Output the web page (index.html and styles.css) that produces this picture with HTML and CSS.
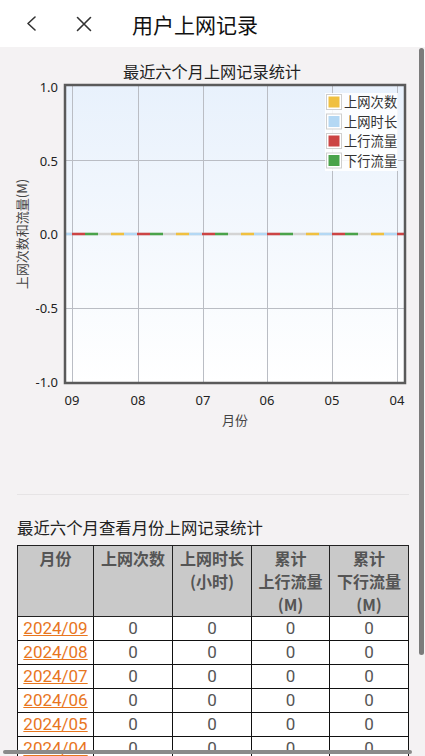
FILE: index.html
```html
<!DOCTYPE html>
<html lang="zh-CN">
<head>
<meta charset="utf-8">
<title>用户上网记录</title>
<link rel="stylesheet" href="styles.css">
</head>
<body>
<header class="topbar">
  <svg class="icon back" width="16" height="16" viewBox="0 0 16 16"><polyline points="11,1 4,7.5 11,14" fill="none" stroke="#333" stroke-width="1.6" stroke-linecap="round" stroke-linejoin="round"/></svg>
  <svg class="icon close" width="16" height="16" viewBox="0 0 16 16"><path d="M1.5 1.5 L14.5 14.5 M14.5 1.5 L1.5 14.5" fill="none" stroke="#333" stroke-width="1.6" stroke-linecap="round"/></svg>
  <h1 class="title">用户上网记录</h1>
</header>
<main class="content">
  <svg class="chart" width="408" height="447" viewBox="0 47 408 447">
    <defs>
      <linearGradient id="bg" x1="0" y1="0" x2="0" y2="1">
        <stop offset="0" stop-color="#e8f1fc"/>
        <stop offset="1" stop-color="#ffffff"/>
      </linearGradient>
    </defs>
    <text class="ctitle" x="212" y="78" text-anchor="middle">最近六个月上网记录统计</text>
    <rect x="65" y="85" width="340" height="298" fill="url(#bg)"/>
    <g stroke="#babdc4" stroke-width="1">
      <line x1="65" y1="160.5" x2="405" y2="160.5"/>
      <line x1="65" y1="308.5" x2="405" y2="308.5"/>
      <line x1="72.5" y1="85" x2="72.5" y2="383"/>
      <line x1="138.5" y1="85" x2="138.5" y2="383"/>
      <line x1="203.5" y1="85" x2="203.5" y2="383"/>
      <line x1="267.5" y1="85" x2="267.5" y2="383"/>
      <line x1="332.5" y1="85" x2="332.5" y2="383"/>
      <line x1="397.5" y1="85" x2="397.5" y2="383"/>
    </g>
    <g stroke-width="2.5">
      <line x1="65" y1="234" x2="405" y2="234" stroke="#d4d4d4"/>
      <line x1="72" y1="234" x2="405" y2="234" stroke="#cc4444" stroke-dasharray="13 52"/>
      <line x1="85" y1="234" x2="405" y2="234" stroke="#4aa34a" stroke-dasharray="13 52"/>
      <line x1="111" y1="234" x2="405" y2="234" stroke="#f0c040" stroke-dasharray="13 52"/>
      <line x1="65" y1="234" x2="405" y2="234" stroke="#b4d8f4" stroke-dasharray="13 52" stroke-dashoffset="6"/>
    </g>
    <rect x="65" y="85" width="340" height="298" fill="none" stroke="#5a5a5a" stroke-width="2.5"/>
    <g class="ylab" text-anchor="end">
      <text x="58" y="92">1.0</text>
      <text x="58" y="165.5">0.5</text>
      <text x="58" y="238.5">0.0</text>
      <text x="58" y="312.5">-0.5</text>
      <text x="58" y="387">-1.0</text>
    </g>
    <g class="xlab" text-anchor="middle">
      <text x="72" y="404.5">09</text>
      <text x="138" y="404.5">08</text>
      <text x="203" y="404.5">07</text>
      <text x="267" y="404.5">06</text>
      <text x="332" y="404.5">05</text>
      <text x="397" y="404.5">04</text>
    </g>
    <text class="axis" x="235" y="425" text-anchor="middle">月份</text>
    <text class="axis" x="0" y="0" text-anchor="middle" transform="translate(27,234) rotate(-90)">上网次数和流量(M)</text>
    <rect x="325" y="93" width="73" height="78" fill="#ffffff" fill-opacity="0.85"/>
    <g class="legend">
      <rect x="326.5" y="94.5" width="15" height="15" fill="#fff" stroke="#cfcfcf"/>
      <rect x="328.5" y="96.5" width="11" height="11" fill="#f0c040"/>
      <text x="344" y="107">上网次数</text>
      <rect x="326.5" y="114" width="15" height="15" fill="#fff" stroke="#cfcfcf"/>
      <rect x="328.5" y="116" width="11" height="11" fill="#b4d8f4"/>
      <text x="344" y="126.5">上网时长</text>
      <rect x="326.5" y="133.5" width="15" height="15" fill="#fff" stroke="#cfcfcf"/>
      <rect x="328.5" y="135.5" width="11" height="11" fill="#cc4444"/>
      <text x="344" y="146">上行流量</text>
      <rect x="326.5" y="153" width="15" height="15" fill="#fff" stroke="#cfcfcf"/>
      <rect x="328.5" y="155" width="11" height="11" fill="#4aa34a"/>
      <text x="344" y="165.5">下行流量</text>
    </g>
  </svg>
  <div class="divider"></div>
  <p class="caption">最近六个月查看月份上网记录统计</p>
  <table class="records">
    <colgroup>
      <col class="c1"><col class="c2"><col class="c3"><col class="c4"><col class="c5">
    </colgroup>
    <thead>
      <tr>
        <th>月份</th>
        <th>上网次数</th>
        <th>上网时长<br>(小时)</th>
        <th>累计<br>上行流量<br>(M)</th>
        <th>累计<br>下行流量<br>(M)</th>
      </tr>
    </thead>
    <tbody>
      <tr><td><a href="#">2024/09</a></td><td>0</td><td>0</td><td>0</td><td>0</td></tr>
      <tr><td><a href="#">2024/08</a></td><td>0</td><td>0</td><td>0</td><td>0</td></tr>
      <tr><td><a href="#">2024/07</a></td><td>0</td><td>0</td><td>0</td><td>0</td></tr>
      <tr><td><a href="#">2024/06</a></td><td>0</td><td>0</td><td>0</td><td>0</td></tr>
      <tr><td><a href="#">2024/05</a></td><td>0</td><td>0</td><td>0</td><td>0</td></tr>
      <tr><td><a href="#">2024/04</a></td><td>0</td><td>0</td><td>0</td><td>0</td></tr>
    </tbody>
  </table>
  <div class="vscroll"></div>
  <div class="hscroll"></div>
</main>
</body>
</html>
```
FILE: styles.css
```css
* { box-sizing: border-box; }
html, body {
  margin: 0;
  padding: 0;
  width: 425px;
  height: 756px;
  overflow: hidden;
  font-family: "Noto Sans", "Noto Sans CJK SC", sans-serif;
  background: #f4f2f3;
}
.topbar {
  height: 47px;
  background: #ffffff;
  display: flex;
  align-items: center;
}
.icon { display: block; flex: none; }
.back { margin-left: 24px; }
.close { margin-left: 36px; }
.title {
  margin: 0 0 0 40px;
  font-family: "Noto Sans CJK SC", sans-serif;
  font-weight: 400;
  font-size: 21px;
  line-height: 28px;
  color: #111;
}
.content {
  position: relative;
  height: 709px;
  overflow: hidden;
  background: #f4f2f3;
}
.chart { display: block; }
.ctitle {
  font-family: "Noto Sans CJK SC", sans-serif;
  font-size: 16.2px;
  fill: #222;
}
.ylab text, .xlab text {
  font-family: "Noto Sans", sans-serif;
  font-size: 13px;
  fill: #222;
}
.axis {
  font-family: "Noto Sans CJK SC", sans-serif;
  font-size: 13px;
  fill: #444;
}
.legend text {
  font-family: "Noto Sans CJK SC", sans-serif;
  font-size: 13.3px;
  fill: #333;
}
.divider {
  margin-left: 17px;
  width: 392px;
  border-top: 1px solid #e6e4e5;
}
.caption {
  margin: 22px 0 8px 17px;
  font-family: "Noto Sans CJK SC", sans-serif;
  font-size: 16.4px;
  line-height: 20px;
  color: #222;
}
.records {
  margin-left: 17px;
  width: 392px;
  table-layout: fixed;
  border-collapse: collapse;
  background: #ffffff;
}
.c1 { width: 76px; }
.c2 { width: 79px; }
.c3 { width: 79px; }
.c4 { width: 78px; }
.c5 { width: 79px; }
.records th {
  background: #c9c9c9;
  color: #555;
  font-family: "Noto Sans CJK SC", sans-serif;
  font-weight: 700;
  font-size: 16px;
  line-height: 23px;
  padding: 1px 0 0;
  height: 71px;
  vertical-align: top;
  text-align: center;
  border: 1px solid #222;
}
.records td {
  height: 24px;
  padding: 0;
  border: 1px solid #111;
  text-align: center;
  font-family: Roboto, "Noto Sans", sans-serif;
  font-size: 17px;
  line-height: 23px;
  color: #555;
}
.records a {
  color: #e8761e;
  text-decoration: underline;
}
.vscroll {
  position: absolute;
  top: 1px;
  right: 1px;
  width: 5px;
  height: 607px;
  border-radius: 3px;
  background: #7b7b7b;
}
.hscroll {
  position: absolute;
  left: 3px;
  top: 703px;
  width: 409px;
  height: 4px;
  border-radius: 2px;
  background: #8a8a8a;
}
```
